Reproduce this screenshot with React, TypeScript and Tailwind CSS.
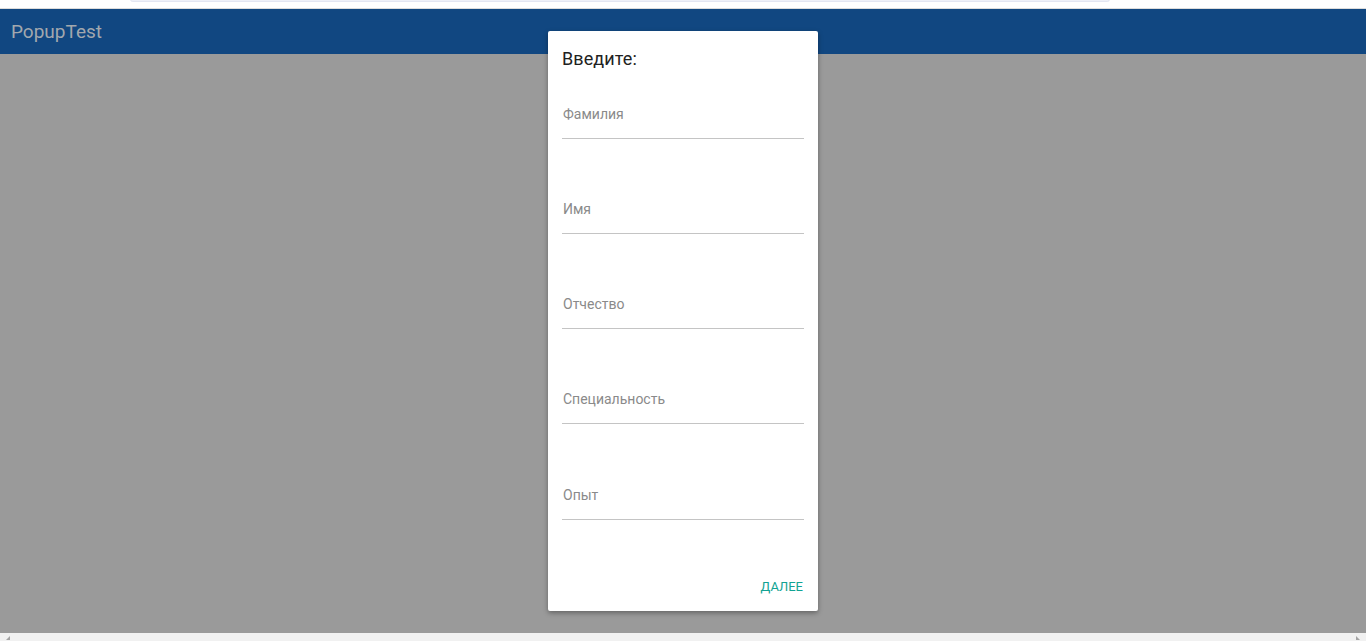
import React from "react";

const fields = ["Фамилия", "Имя", "Отчество", "Специальность", "Опыт"];

export default function App() {
  return (
    <div
      className="relative w-[1366px] h-[641px] overflow-hidden flex flex-col bg-[#9a9a9a]"
      style={{ fontFamily: "Roboto, 'Noto Sans', sans-serif" }}
    >
      {/* top browser strip */}
      <div className="h-[9px] bg-white border-b border-[#dcdcdc] flex justify-start">
        <div className="ml-[130px] w-[980px] h-[3px] -mt-[1px] rounded-b-[6px] bg-[#eef0f8] border border-t-0 border-[#e3e6f2]" />
      </div>
      {/* header */}
      <div className="h-[45px] bg-[#114781] flex items-center pl-[11px]">
        <span className="text-[19px] leading-[24px] text-[#a2a8ae]">PopupTest</span>
      </div>
      {/* content */}
      <div className="flex-1 bg-[#9a9a9a]" />
      {/* horizontal scrollbar */}
      <div className="h-[8px] bg-[#f1f1f1] flex items-end justify-between px-[6px] pb-[1px]">
        <svg width="4" height="4" viewBox="0 0 4 4">
          <path d="M4 0 L4 4 L0 4 Z" fill="#a3a3a3" />
        </svg>
        <svg width="4" height="4" viewBox="0 0 4 4">
          <path d="M0 0 L0 4 L4 4 Z" fill="#a3a3a3" />
        </svg>
      </div>

      {/* dialog */}
      <div className="absolute left-[548px] top-[31px] w-[270px] h-[580px] bg-white rounded-[2px] shadow-[0_2px_5px_rgba(0,0,0,0.35)] flex flex-col px-[14px] pt-[16px]">
        <div className="text-[18px] leading-[24px] text-[#212121] tracking-[0.1px]">Введите:</div>
        <div className="flex flex-col mt-[32px] gap-[59px]">
          {fields.map((f, i) => (
            <div key={f} className={i === 4 ? "flex flex-col mt-[1px]" : "flex flex-col"}>
              <div className="h-[21px] pt-[1px] leading-[20px] text-[14px] text-[#8a8a8a] pl-[1px]">{f}</div>
              <div className="h-[14px]" />
              <div className="h-[1px] bg-[#c4c4c4]" />
            </div>
          ))}
        </div>
        <div className="flex-1" />
        <div className="flex justify-end pb-[14px] pr-[1px]">
          <span className="text-[13px] leading-[20px] text-[#12a393]">ДАЛЕЕ</span>
        </div>
      </div>
    </div>
  );
}
